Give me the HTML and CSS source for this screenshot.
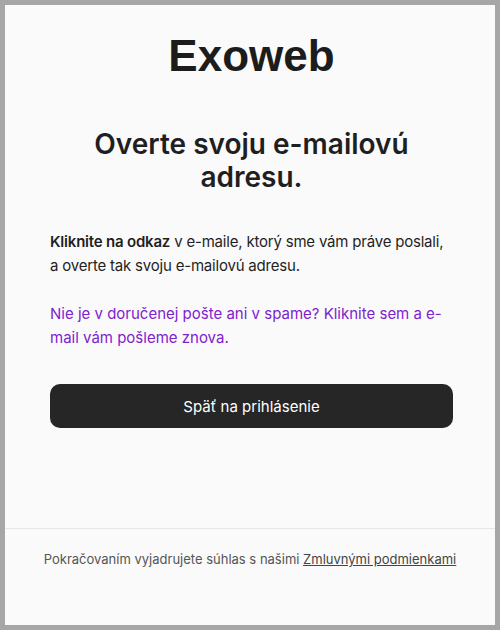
FILE: index.html
```html
<!DOCTYPE html>
<html lang="sk">

<head>
  <meta charset="UTF-8">
  <meta name="viewport" content="width=device-width, initial-scale=1.0">
  <title>Exoweb – Overte svoju e-mailovú adresu</title>
  <link rel="stylesheet" href="styles.css">
</head>

<body>
  <div class="frame">
    <main class="card">
      <h1 class="logo">Exoweb</h1>
      <h2 class="title">Overte svoju e-mailovú adresu.</h2>
      <p class="lead"><strong>Kliknite na odkaz</strong> v e-maile, ktorý sme vám práve poslali, a overte tak svoju e-mailovú adresu.</p>
      <p class="resend"><a href="#">Nie je v doručenej pošte ani v spame? Kliknite sem a e-mail vám pošleme znova.</a></p>
      <button class="back-button">Späť na prihlásenie</button>
    </main>
    <footer class="footer">
      Pokračovaním vyjadrujete súhlas s našimi <a href="#">Zmluvnými podmienkami</a>
    </footer>
  </div>
</body>

</html>
```

FILE: styles.css
```css
/* Reset */
* {
  margin: 0;
  padding: 0;
  box-sizing: border-box;
}

html,
body {
  height: 100%;
  font-family: Inter, "Noto Sans", sans-serif;
  color: #1f1f1f;
  background: #a6a6a6;
}

/* Grey frame round the whole page */
.frame {
  height: 630px;
  border: 5px solid #a6a6a6;
  background: #fafafa;
  display: flex;
  flex-direction: column;
}

.card {
  flex: 1;
  padding: 25px 42px 0 45px;
}

.logo {
  font-family: "Liberation Sans", Arial, sans-serif;
  font-size: 44px;
  line-height: 52px;
  font-weight: 700;
  text-align: center;
  color: #1c1c1c;
}

.title {
  margin: 46px 30px 0;
  font-size: 28px;
  line-height: 33px;
  font-weight: 600;
  text-align: center;
}

.lead {
  margin-top: 36px;
  font-size: 15px;
  line-height: 24px;
  letter-spacing: -0.2px;
}

.lead strong {
  font-weight: 600;
}

.resend {
  margin-top: 24px;
  font-size: 15px;
  line-height: 24px;
}

.resend a {
  color: #7e22ce;
  text-decoration: none;
}

.back-button {
  display: block;
  width: 100%;
  height: 44px;
  margin-top: 34px;
  border: none;
  border-radius: 10px;
  background: #262626;
  color: #fff;
  font-family: inherit;
  font-size: 15px;
  font-weight: 400;
  cursor: pointer;
}

/* Footer with the terms link */
.footer {
  height: 97px;
  padding-top: 21px;
  border-top: 1px solid #e6e6e6;
  text-align: center;
  font-size: 13px;
  line-height: 18px;
  color: #555;
}

.footer a {
  color: #444;
}
```
